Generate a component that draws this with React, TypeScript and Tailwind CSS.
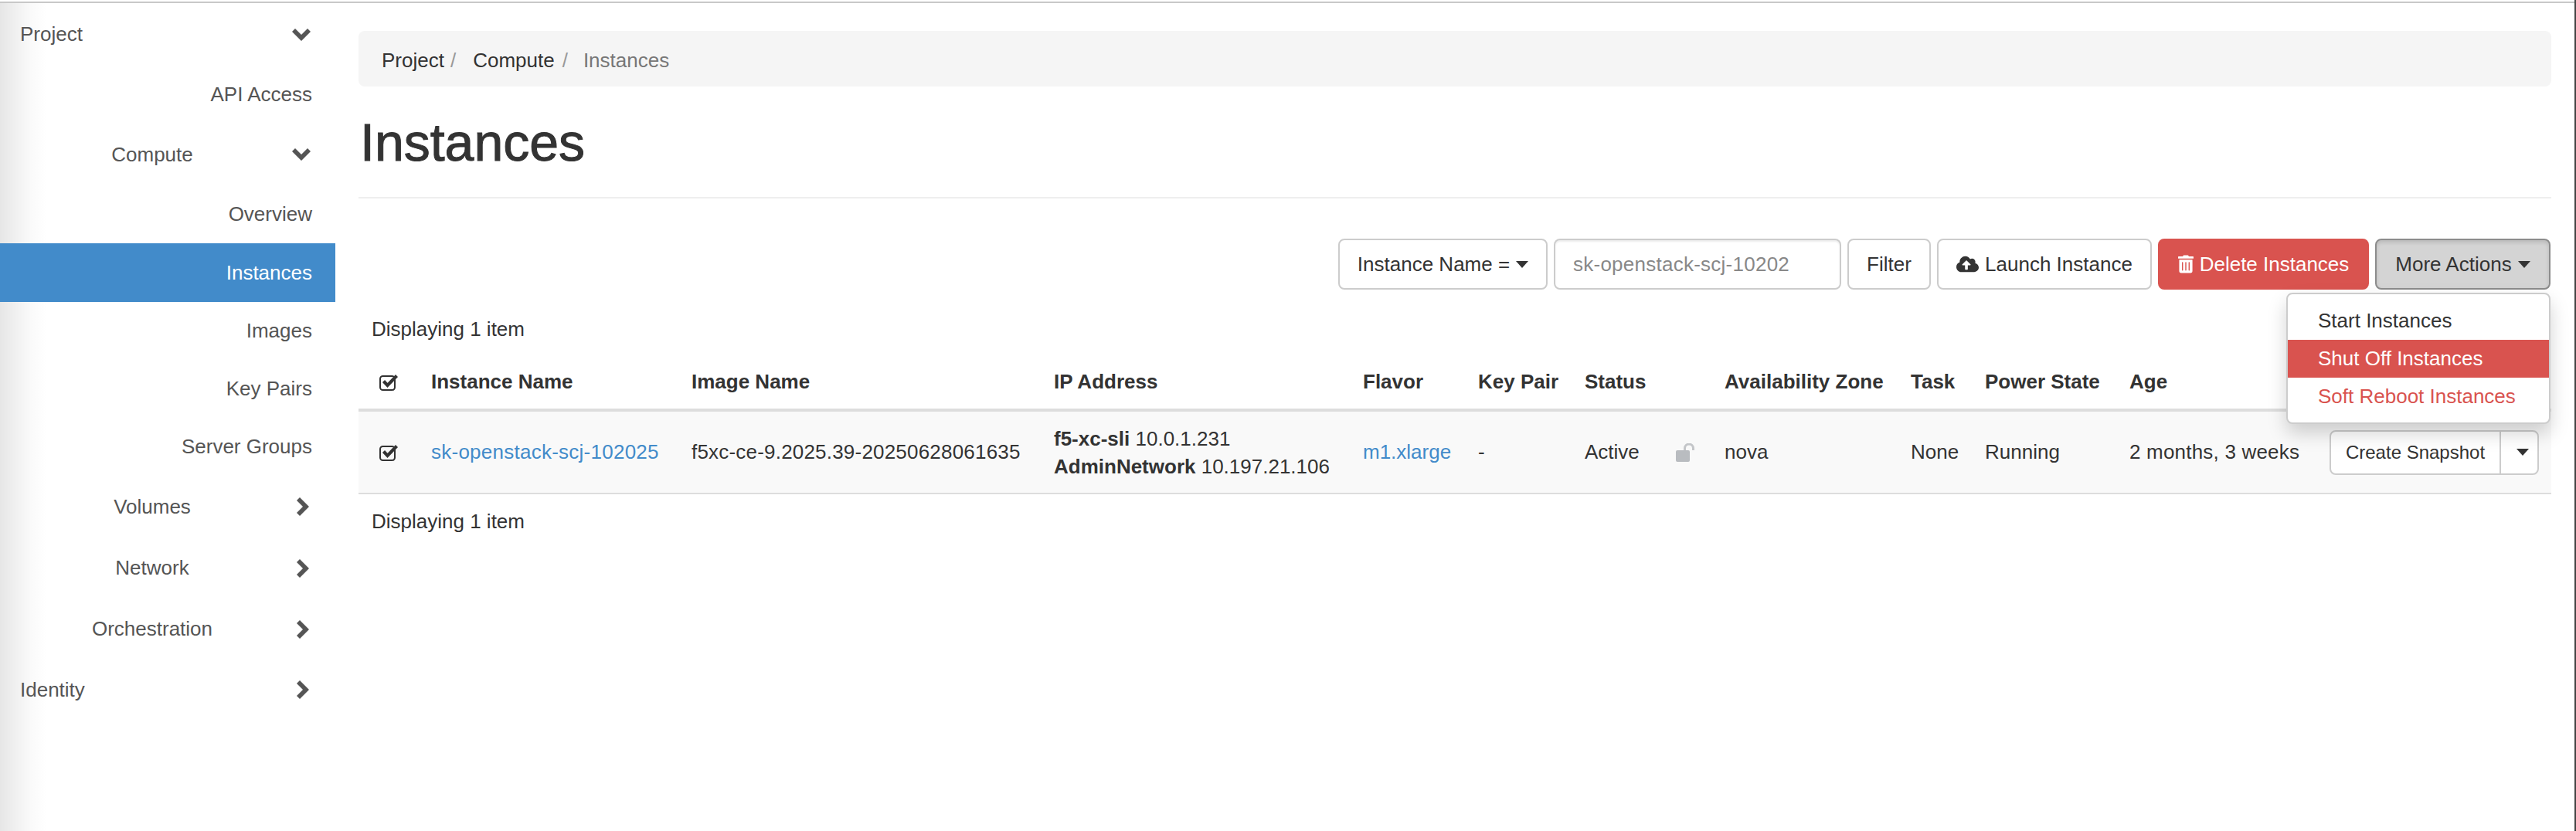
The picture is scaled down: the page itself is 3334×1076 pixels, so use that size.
import { FaCloudUploadAlt, FaTrashAlt } from "react-icons/fa";

const font = "font-['Liberation_Sans',Arial,sans-serif]";

function ChevronDown() {
  return (
    <svg viewBox="0 0 24 16" className="h-4 w-6 fill-[#555]">
      <polygon points="0,4 4,0 12,8 20,0 24,4 12,16" />
    </svg>
  );
}

function ChevronRight() {
  return (
    <svg viewBox="0 0 16 24" className="h-6 w-4 fill-[#555]">
      <polygon points="4,0 16,12 4,24 0,20 8,12 0,4" />
    </svg>
  );
}

function Caret() {
  return <span className="ml-2 inline-block h-0 w-0 border-x-[8px] border-t-[9px] border-x-transparent border-t-current align-middle" />;
}

function CheckBox() {
  return (
    <svg viewBox="0 0 25 22" className="block h-[22px] w-[25px]">
      <rect x="1" y="3" width="19" height="18" rx="3.5" fill="none" stroke="#333" strokeWidth="2" />
      <polyline points="5.5,9.5 10.5,15 22.5,2.5" fill="none" stroke="#333" strokeWidth="4.2" />
    </svg>
  );
}

function UnlockIcon() {
  return (
    <svg viewBox="0 0 25 24" className="h-6 w-[25px] shrink-0">
      <rect x="0" y="9" width="18" height="15" rx="2" fill="#b9bcc0" />
      <path d="M11.5 9 V6.5 a5.5 5.5 0 0 1 11 0 V9" fill="none" stroke="#c4c6c9" strokeWidth="3" />
    </svg>
  );
}

function NavRow({ label, height, chevron, align = "center" }: { label: string; height: string; chevron: "down" | "right"; align?: "left" | "center" }) {
  return (
    <div className={`flex items-center justify-between pr-[32px] ${height}`}>
      {align === "left" ? (
        <span className="pl-[26px]">{label}</span>
      ) : (
        <span className="w-[394px] text-center">{label}</span>
      )}
      <span className={chevron === "down" ? "-ml-[40px] flex w-6 justify-end" : "-ml-[40px] flex w-6 justify-end pr-[2px]"}>
        {chevron === "down" ? <ChevronDown /> : <ChevronRight />}
      </span>
    </div>
  );
}

function NavLeaf({ label, height, active }: { label: string; height: string; active?: boolean }) {
  return (
    <div className={`flex items-center justify-end pr-[30px] ${height} ${active ? "bg-[#428bca] text-white" : ""}`}>
      {label}
    </div>
  );
}

function Sidebar() {
  return (
    <div className="h-[1072px] w-[434px] shrink-0 bg-[linear-gradient(to_right,#e6e6e6,#fafafa_40px,#ffffff_60px)] pt-[2px] text-[#555]">
      <div className="flex h-[78px] items-center justify-between pr-[32px]">
        <span className="pb-[2px] pl-[26px]">Project</span>
        <ChevronDown />
      </div>
      <NavLeaf label="API Access" height="h-[76px]" />
      <NavRow label="Compute" height="h-[80px]" chevron="down" />
      <NavLeaf label="Overview" height="h-[75px]" />
      <NavLeaf label="Instances" height="h-[76px]" active />
      <NavLeaf label="Images" height="h-[75px]" />
      <NavLeaf label="Key Pairs" height="h-[75px]" />
      <NavLeaf label="Server Groups" height="h-[75px]" />
      <NavRow label="Volumes" height="h-[80px]" chevron="right" />
      <NavRow label="Network" height="h-[79px]" chevron="right" />
      <NavRow label="Orchestration" height="h-[79px]" chevron="right" />
      <NavRow label="Identity" height="h-[78px]" chevron="right" align="left" />
    </div>
  );
}

function Toolbar() {
  const button = "flex h-[66px] items-center justify-center rounded-lg border-2 border-[#ccc] bg-white";
  return (
    <div className="relative mr-[1px] mt-[52px] flex justify-end gap-2">
      <div className={`${button} w-[271px]`}>
        Instance Name =<Caret />
      </div>
      <div className="flex h-[66px] w-[372px] items-center rounded-lg border-2 border-[#ccc] pl-[23px] tracking-[0.25px] text-[#888] shadow-[inset_0_2px_2px_rgba(0,0,0,0.075)]">
        sk-openstack-scj-10202
      </div>
      <div className={`${button} w-[108px]`}>Filter</div>
      <div className={`${button} w-[278px] gap-2`}>
        <FaCloudUploadAlt className="h-[26px] w-[29px]" />
        Launch Instance
      </div>
      <div className="flex h-[66px] w-[273px] items-center justify-center gap-2 rounded-lg border-2 border-[#d9534f] bg-[#d9534f] text-white">
        <FaTrashAlt className="h-[26px] w-[20px]" />
        Delete Instances
      </div>
      <div className="flex h-[66px] w-[227px] items-center justify-center rounded-lg border-2 border-[#8c8c8c] bg-[#d4d4d4] shadow-[inset_0_3px_5px_rgba(0,0,0,0.125)]">
        More Actions
        <Caret />
      </div>
      <div className="absolute right-0 top-[70px] z-10 flex h-[170px] w-[342px] flex-col justify-center rounded-lg border-2 border-[#ccc] bg-white shadow-[0_12px_24px_rgba(0,0,0,0.175)]">
        <div className="flex h-[49px] items-center pl-[39px]">Start Instances</div>
        <div className="flex h-[49px] items-center bg-[#d9534f] pl-[39px] text-white">Shut Off Instances</div>
        <div className="flex h-[49px] items-center pl-[39px] text-[#d9534f]">Soft Reboot Instances</div>
      </div>
    </div>
  );
}

function InstancesTable() {
  const th = "px-4 pb-[3px] text-left font-bold";
  const td = "px-4";
  return (
    <table className="w-full table-fixed border-collapse">
      <colgroup>
        <col className="w-[78px]" />
        <col className="w-[337px]" />
        <col className="w-[469px]" />
        <col className="w-[400px]" />
        <col className="w-[149px]" />
        <col className="w-[138px]" />
        <col className="w-[181px]" />
        <col className="w-[241px]" />
        <col className="w-[96px]" />
        <col className="w-[187px]" />
        <col className="w-[259px]" />
        <col />
      </colgroup>
      <thead>
        <tr className="h-[68px] border-b-4 border-[#ddd]">
          <th className={th}>
            <span className="block pl-[11px]"><CheckBox /></span>
          </th>
          <th className={th}>Instance Name</th>
          <th className={th}>Image Name</th>
          <th className={th}>IP Address</th>
          <th className={th}>Flavor</th>
          <th className={th}>Key Pair</th>
          <th className={th}>Status</th>
          <th className={th}>Availability Zone</th>
          <th className={th}>Task</th>
          <th className={th}>Power State</th>
          <th className={th}>Age</th>
          <th className={th}></th>
        </tr>
      </thead>
      <tbody>
        <tr className="h-[108px] border-b-2 border-[#ddd] bg-[#f9f9f9]">
          <td className={td}>
            <span className="block pl-[11px]"><CheckBox /></span>
          </td>
          <td className={`${td} whitespace-nowrap tracking-[0.25px] text-[#428bca]`}>sk-openstack-scj-102025</td>
          <td className={`${td} whitespace-nowrap tracking-[0.2px]`}>f5xc-ce-9.2025.39-20250628061635</td>
          <td className={`${td} whitespace-nowrap leading-[36px]`}>
            <div><b>f5-xc-sli</b> 10.0.1.231</div>
            <div><b>AdminNetwork</b> 10.197.21.106</div>
          </td>
          <td className={`${td} text-[#428bca]`}>m1.xlarge</td>
          <td className={td}>-</td>
          <td className={td}>
            <div className="flex items-center justify-between pr-[6px]">
              Active
              <UnlockIcon />
            </div>
          </td>
          <td className={td}>nova</td>
          <td className={td}>None</td>
          <td className={td}>Running</td>
          <td className={`${td} whitespace-nowrap tracking-[0.2px]`}>2 months, 3 weeks</td>
          <td className="pl-[16px]">
            <div className="flex h-[58px] w-[271px] rounded-lg border-2 border-[#ccc] bg-white text-[24px]">
              <div className="flex w-[220px] items-center justify-center border-r-2 border-[#ccc]">Create Snapshot</div>
              <div className="flex flex-1 items-center justify-center"><Caret /></div>
            </div>
          </td>
        </tr>
      </tbody>
    </table>
  );
}

export default function App() {
  return (
    <div className={`h-[1076px] w-[3334px] overflow-hidden border-r-2 border-[#444] bg-white text-[26px] text-[#333] ${font}`}>
      <div className="h-[2px] bg-white" />
      <div className="h-[2px] bg-[#c8c8c8]" />
      <div className="flex">
        <Sidebar />
        <main className="ml-[30px] w-[2838px] pt-[36px]">
          <div className="flex h-[72px] items-center rounded-lg bg-[#f5f5f5] pl-[30px] pt-[4px]">
            <span>Project</span>
            <span className="ml-[8px] text-[#999]">/</span>
            <span className="ml-[22px]">Compute</span>
            <span className="ml-[10px] text-[#999]">/</span>
            <span className="ml-[20px] text-[#777]">Instances</span>
          </div>
          <h1 className="mt-[36px] flex h-[72px] items-center pl-[2px] text-[68px] font-normal leading-none [-webkit-text-stroke:1px_#333]">Instances</h1>
          <div className="mt-[35px] h-[2px] bg-[#eee]" />
          <Toolbar />
          <div className="flex h-[88px] items-center pl-[17px] pt-[14px]">Displaying 1 item</div>
          <InstancesTable />
          <div className="flex h-[70px] items-center pl-[17px]">Displaying 1 item</div>
        </main>
      </div>
    </div>
  );
}
